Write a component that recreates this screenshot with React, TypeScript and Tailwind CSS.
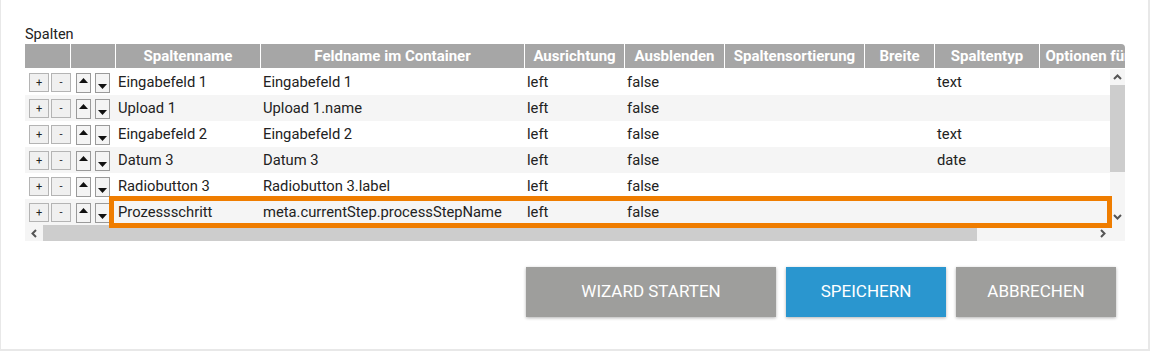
const cols = [
  { title: "", w: "w-[46px]" },
  { title: "", w: "w-[45px]" },
  { title: "Spaltenname", w: "w-[145px]" },
  { title: "Feldname im Container", w: "w-[264px]" },
  { title: "Ausrichtung", w: "w-[100px]" },
  { title: "Ausblenden", w: "w-[100px]" },
  { title: "Spaltensortierung", w: "w-[140px]" },
  { title: "Breite", w: "w-[70px]" },
  { title: "Spaltentyp", w: "w-[105px]" },
  { title: "Optionen für Spaltentyp", w: "w-[172px]" },
];

const rows = [
  ["Eingabefeld 1", "Eingabefeld 1", "left", "false", "", "", "text"],
  ["Upload 1", "Upload 1.name", "left", "false", "", "", ""],
  ["Eingabefeld 2", "Eingabefeld 2", "left", "false", "", "", "text"],
  ["Datum 3", "Datum 3", "left", "false", "", "", "date"],
  ["Radiobutton 3", "Radiobutton 3.label", "left", "false", "", "", ""],
  ["Prozessschritt", "meta.currentStep.processStepName", "left", "false", "", "", ""],
];

function Chevron({ dir }: { dir: "up" | "down" | "left" | "right" }) {
  const d = {
    up: "M1 6 L4.5 2.5 L8 6",
    down: "M1 3 L4.5 6.5 L8 3",
    left: "M6 1 L2.5 4.5 L6 8",
    right: "M3 1 L6.5 4.5 L3 8",
  }[dir];
  return (
    <svg width="9" height="9" viewBox="0 0 9 9">
      <path d={d} fill="none" stroke="#555" strokeWidth="2" />
    </svg>
  );
}

function RowControls() {
  return (
    <>
      <div className="w-[46px] shrink-0 flex items-start pt-[4px] pl-[4px] gap-[2px] overflow-hidden">
        <div className="w-[20px] h-[19px] shrink-0 bg-[#f0f0f0] border border-[#b4b4b4] flex items-center justify-center text-[11px] leading-none text-[#222]">
          +
        </div>
        <div className="w-[20px] h-[19px] shrink-0 bg-[#f0f0f0] border border-[#b4b4b4] flex items-center justify-center text-[11px] leading-none text-[#222]">
          -
        </div>
      </div>
      <div className="w-[45px] shrink-0 flex items-start pt-[4px] pl-[5px] gap-[4px]">
        <div className="w-[15px] h-[20px] bg-[#f4f4f4] border border-[#9a9a9a] flex justify-center pt-[4px]">
          <svg width="9" height="5" viewBox="0 0 9 5">
            <path d="M0 5 L4.5 0 L9 5 Z" fill="#111" />
          </svg>
        </div>
        <div className="w-[15px] h-[20px] bg-[#f4f4f4] border border-[#9a9a9a] flex justify-center items-end pb-[3px]">
          <svg width="9" height="5" viewBox="0 0 9 5">
            <path d="M0 0 L9 0 L4.5 5 Z" fill="#111" />
          </svg>
        </div>
      </div>
    </>
  );
}

export default function App() {
  return (
    <div className="w-[1150px] h-[351px] bg-white border-l border-r-2 border-b-2 border-[#e8e8e8] font-['Roboto',sans-serif] text-[#222]">
      <div className="pt-[26px] pl-[24px]">
        <div className="text-[14.5px] leading-[18px]">Spalten</div>
        <div className="relative w-[1100px]">
          {/* header */}
          <div className="flex h-[25px] bg-[#a6a6a6] rounded-tr-[4px] overflow-hidden border-b border-white">
            {cols.map((c, i) => (
              <div
                key={i}
                className={`${c.w} shrink-0 border-r border-white text-white font-bold text-[15px] flex items-center justify-center whitespace-nowrap overflow-hidden`}
              >
                {c.title}
              </div>
            ))}
          </div>

          {/* body */}
          <div className="flex">
            <div className="w-[1085px] overflow-hidden">
              {rows.map((r, ri) => (
                <div
                  key={ri}
                  className={`flex h-[26px] ${ri % 2 === 1 ? "bg-[#f5f5f5]" : "bg-white"}`}
                >
                  <RowControls />
                  {r.map((cell, ci) => (
                    <div
                      key={ci}
                      className={`${cols[ci + 2].w} shrink-0 pl-[2px] text-[14.75px] leading-[26px] whitespace-nowrap`}
                    >
                      {cell}
                    </div>
                  ))}
                  <div className="w-[200px] shrink-0" />
                </div>
              ))}
            </div>
            {/* vertical scrollbar */}
            <div className="w-[15px] bg-[#f5f5f5] flex flex-col">
              <div className="h-[16px] flex items-center justify-center">
                <Chevron dir="up" />
              </div>
              <div className="h-[87px] bg-[#cdcdcd]" />
              <div className="flex-1 flex items-end justify-center pb-[4px]">
                <Chevron dir="down" />
              </div>
            </div>
          </div>

          {/* horizontal scrollbar */}
          <div className="flex h-[16px] bg-[#f5f5f5]">
            <div className="w-[18px] flex items-center justify-center">
              <Chevron dir="left" />
            </div>
            <div className="w-[934px] bg-[#cdcdcd]" />
            <div className="w-[133px] flex items-center justify-end pr-[3px]">
              <Chevron dir="right" />
            </div>
          </div>

          {/* highlight */}
          <div className="absolute left-[84px] top-[152px] w-[1003px] h-[32px] border-[5px] border-[#ef7d00]" />
        </div>
      </div>

      <div className="flex gap-[10px] pl-[525px] mt-[26px]">
        <div className="w-[250px] h-[50px] bg-[#9e9e9c] text-white text-[17px] uppercase flex items-center justify-center shadow-[0_1px_3px_rgba(0,0,0,0.3)]">
          Wizard starten
        </div>
        <div className="w-[160px] h-[50px] bg-[#2a96cf] text-white text-[17px] uppercase flex items-center justify-center shadow-[0_1px_3px_rgba(0,0,0,0.3)]">
          Speichern
        </div>
        <div className="w-[160px] h-[50px] bg-[#9e9e9c] text-white text-[17px] uppercase flex items-center justify-center shadow-[0_1px_3px_rgba(0,0,0,0.3)]">
          Abbrechen
        </div>
      </div>
    </div>
  );
}
